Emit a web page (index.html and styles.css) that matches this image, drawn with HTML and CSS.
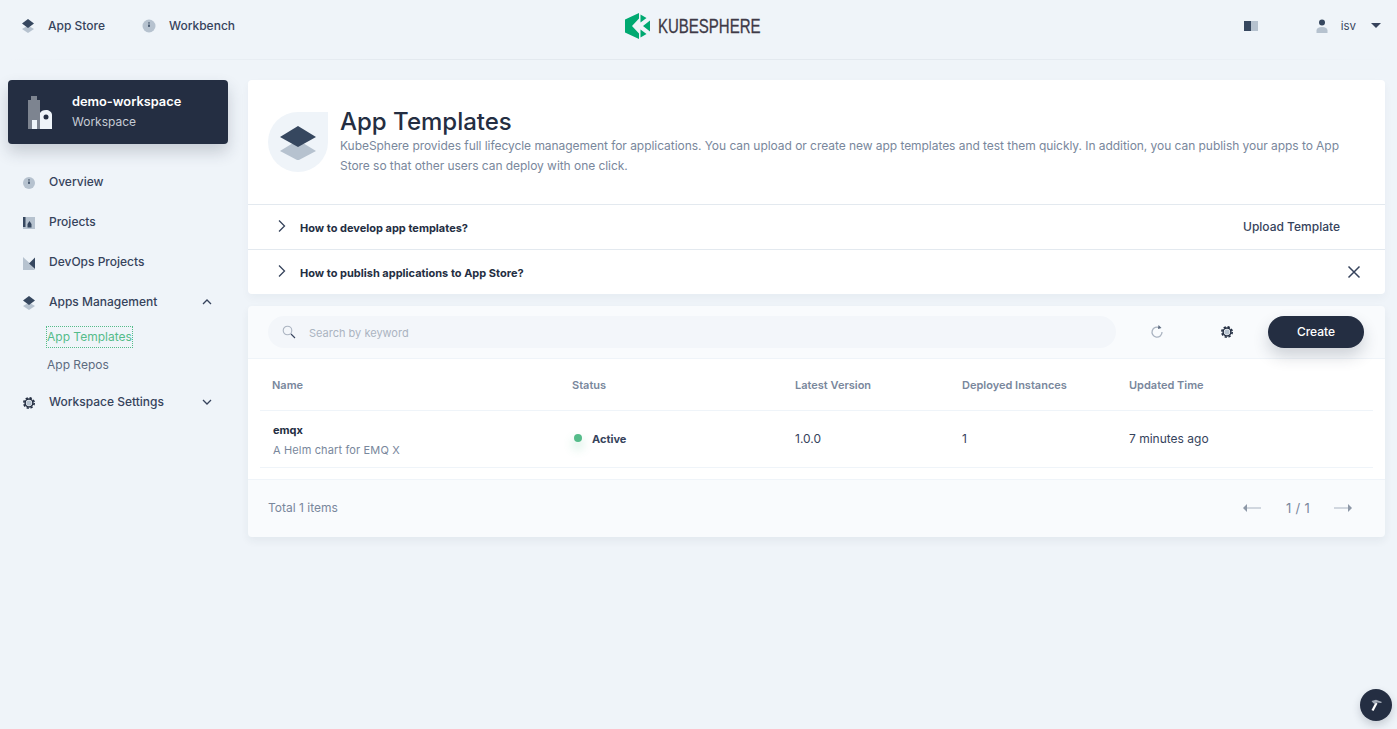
FILE: index.html
```html
<!DOCTYPE html>
<html lang="en">

<head>
    <meta charset="UTF-8">
    <title>App Templates - KubeSphere</title>
    <link rel="stylesheet" href="styles.css">
</head>

<body>
    <header class="topbar">
        <nav class="topnav">
            <a class="topnav-item">
                <svg class="icon" viewBox="0 0 16 16"><path class="light" d="M8 7.500l6 3.500-6 4-6-4z"/><path class="dark" d="M8 1l6 4.500L8 10 2 5.500z"/></svg>
                App Store
            </a>
            <a class="topnav-item">
                <svg class="icon" viewBox="0 0 16 16"><circle class="light" cx="8" cy="8" r="6.500"/><path class="dark" d="M7.500 4h1L8.300 8H7.700z"/><circle class="dark" cx="8" cy="8" r="1"/></svg>
                Workbench
            </a>
        </nav>
        <div class="logo">
            <svg class="logo-mark" viewBox="0 0 25 26">
                <path class="logo-green" d="M14 0L0 6.500v13L14 26v-5.500L7 13l7-7.500z"/>
                <path class="logo-green" d="M15.500 1.500l6 3.500-6 4.500zM25 7.500v11L18 13zM15.500 16.500l6 4.500-6 3.500z"/>
            </svg>
            <span class="logo-text">KUBESPHERE</span>
        </div>
        <div class="top-right">
            <svg class="icon" viewBox="0 0 16 16"><path class="dark" d="M1 3h7v10H1z"/><path class="light" d="M8 3h7v10H8z"/></svg>
            <div class="user">
                <svg class="icon" viewBox="0 0 16 16"><path class="light" d="M2.500 15v-2.500c0-2 2-3.500 5.500-3.500s5.500 1.500 5.500 3.500V15z"/><circle class="dark" cx="8" cy="4.500" r="3"/></svg>
                <span class="user-name">isv</span>
                <span class="caret"></span>
            </div>
        </div>
    </header>

    <div class="layout">
        <aside class="sidebar">
            <div class="ws-card">
                <svg class="ws-icon" viewBox="0 0 24 34">
                    <path fill="#7d8490" d="M0 5h3V1h6v4h3v29H0z"/>
                    <path fill="#eff4f9" d="M4 25h5v9H4z"/>
                    <path fill="#eff4f9" d="M12 18c1-2 3-3 6-3s6 2 6 5v14H12z"/>
                    <circle fill="#242e42" cx="18" cy="22" r="2.500"/>
                </svg>
                <div>
                    <div class="ws-name">demo-workspace</div>
                    <div class="ws-type">Workspace</div>
                </div>
            </div>
            <ul class="menu">
                <li class="menu-item">
                    <svg class="icon" viewBox="0 0 16 16"><circle class="light" cx="8" cy="8" r="6"/><path class="dark" d="M7.500 4h1L8.300 8H7.700z"/><circle class="dark" cx="8" cy="8" r="1"/></svg>
                    Overview
                </li>
                <li class="menu-item">
                    <svg class="icon" viewBox="0 0 16 16"><path class="light" d="M2 2h12v12H2z"/><path class="dark" d="M2 2h2.500v10H2zM6.500 9l2-3 2 3v3.500h-4z"/></svg>
                    Projects
                </li>
                <li class="menu-item">
                    <svg class="icon" viewBox="0 0 16 16"><path class="light" d="M2 2l7 6.500L14 15H2z"/><path class="dark" d="M14 2.500V14L8 8.500z"/></svg>
                    DevOps Projects
                </li>
                <li class="menu-item">
                    <svg class="icon" viewBox="0 0 16 16"><path class="light" d="M8 7.500l6 3.500-6 4-6-4z"/><path class="dark" d="M8 1l6 4.500L8 10 2 5.500z"/></svg>
                    Apps Management
                    <svg class="chev" viewBox="0 0 12 12"><path d="M2 8l4-4 4 4"/></svg>
                </li>
                <li class="sub-list">
                    <a class="sub-item active">App Templates</a>
                    <a class="sub-item">App Repos</a>
                </li>
                <li class="menu-item">
                    <svg class="icon" viewBox="0 0 16 16"><circle class="gear-teeth" cx="8" cy="8" r="5.200"/><circle class="gear-ring" cx="8" cy="8" r="3.900"/><circle class="light" cx="8" cy="8" r="2.600"/></svg>
                    Workspace Settings
                    <svg class="chev" viewBox="0 0 12 12"><path d="M2 4l4 4 4-4"/></svg>
                </li>
            </ul>
        </aside>

        <main class="content">
            <section class="banner">
                <div class="banner-head">
                    <div class="banner-icon">
                        <svg viewBox="0 0 36 36" width="36" height="36"><path fill="#b6c2cf" d="M18 16l18 11-18 9.500L0 27z"/><path fill="#36475f" d="M18 2l18 11-18 10L0 13z"/></svg>
                    </div>
                    <div>
                        <h1 class="banner-title">App Templates</h1>
                        <p class="banner-desc">KubeSphere provides full lifecycle management for applications. You can upload or create new app templates and test them quickly. In addition, you can publish your apps to App Store so that other users can deploy with one click.</p>
                    </div>
                </div>
                <div class="tip">
                    <svg class="tip-arrow" viewBox="0 0 12 12"><path d="M3 .5L8.500 6 3 11.500"/></svg>
                    <span class="tip-text">How to develop app templates?</span>
                    <a class="tip-link">Upload Template</a>
                </div>
                <div class="tip">
                    <svg class="tip-arrow" viewBox="0 0 12 12"><path d="M3 .5L8.500 6 3 11.500"/></svg>
                    <span class="tip-text">How to publish applications to App Store?</span>
                    <svg class="tip-close" viewBox="0 0 14 14"><path d="M1.500 1.500l11 11M12.500 1.500l-11 11"/></svg>
                </div>
            </section>

            <section class="panel">
                <div class="toolbar">
                    <div class="search">
                        <svg class="search-icon" viewBox="0 0 14 14"><circle cx="5.500" cy="5.500" r="4.300"/><path class="search-handle" d="M9 9l4 4"/></svg>
                        <span class="search-text">Search by keyword</span>
                    </div>
                    <svg class="tool-icon" viewBox="0 0 16 16"><path fill="none" stroke="#abb4c1" stroke-width="1.300" d="M10.500 3.800A5 5 0 1 0 13 8"/><path fill="#5d6b80" d="M9.500 1l3 3-3.500 1z"/></svg>
                    <svg class="tool-icon" viewBox="0 0 16 16"><circle class="gear-teeth" cx="8" cy="8" r="5.200"/><circle class="gear-ring" cx="8" cy="8" r="3.900"/><circle class="light" cx="8" cy="8" r="2.600"/></svg>
                    <button class="create-btn" type="button">Create</button>
                </div>
                <div class="table">
                    <div class="row head-row">
                        <div>Name</div>
                        <div>Status</div>
                        <div>Latest Version</div>
                        <div>Deployed Instances</div>
                        <div>Updated Time</div>
                    </div>
                    <div class="row body-row">
                        <div class="app-cell">
                            <div class="app-name">emqx</div>
                            <div class="app-desc">A Helm chart for EMQ X</div>
                        </div>
                        <div class="status"><span class="dot"></span>Active</div>
                        <div>1.0.0</div>
                        <div>1</div>
                        <div>7 minutes ago</div>
                    </div>
                </div>
                <div class="panel-foot">
                    <span>Total 1 items</span>
                    <div class="pager">
                        <svg class="pager-arrow" viewBox="0 0 18 8"><path fill="#d1d7df" d="M4 3h14v2H4z"/><path fill="#8d98a7" d="M4 0v8L0 4z"/></svg>
                        <span class="pager-num">1 / 1</span>
                        <svg class="pager-arrow" viewBox="0 0 18 8"><path fill="#d1d7df" d="M0 3h14v2H0z"/><path fill="#8d98a7" d="M14 0v8l4-4z"/></svg>
                    </div>
                </div>
            </section>
        </main>
    </div>

    <button class="tool-fab" type="button">
        <svg viewBox="0 0 16 16" width="16" height="16"><path fill="#fff" d="M3.500 13l2 1 4-7.500-2-1z"/><path fill="#a5adb9" d="M3.500 4l4.500-1.200L14 5l-1 1-4-.5L6.500 7l-1.300-1z"/></svg>
    </button>
</body>

</html>
```

FILE: styles.css
```css
* {
    box-sizing: border-box;
}

html,
body {
    margin: 0;
    height: 100%;
}

body {
    background: #eff4f9;
    color: #36435c;
    font-family: "Inter", "Roboto", sans-serif;
    font-size: 12px;
    line-height: 20px;
    overflow: hidden;
}

.icon {
    width: 16px;
    height: 16px;
    flex: none;
}

.dark {
    fill: #36475f;
}

.light {
    fill: #b6c2cf;
}

.gear-teeth {
    fill: none;
    stroke: #242e42;
    stroke-width: 1.600;
    stroke-dasharray: 2.300 1.780;
}

.gear-ring {
    fill: none;
    stroke: #242e42;
    stroke-width: 1.500;
}

/* top bar */
.topbar {
    display: flex;
    align-items: center;
    justify-content: space-between;
    height: 60px;
    padding: 0 16px 8px 20px;
    border-bottom: 1px solid transparent;
    border-image: linear-gradient(to right, #eff4f9, #e3e9ef 30%, #e3e9ef 70%, #eff4f9) 1;
    position: relative;
}

.topnav {
    display: flex;
    gap: 36px;
}

.topnav-item {
    display: flex;
    align-items: center;
    gap: 12px;
    font-weight: 500;
}

.logo {
    position: absolute;
    left: 625px;
    top: 13px;
    display: flex;
    align-items: center;
    gap: 8px;
}

.logo-mark {
    width: 25px;
    height: 26px;
}

.logo-green {
    fill: #00a971;
}

.logo-text {
    display: inline-block;
    width: 102px;
    color: #3e3a47;
    font-family: "Liberation Sans", sans-serif;
    font-size: 20px;
    line-height: 26px;
    white-space: nowrap;
    -webkit-text-stroke: .3px #3e3a47;
    transform-origin: left center;
    transform: scaleX(0.75);
}

.top-right {
    display: flex;
    align-items: center;
    gap: 55px;
}

.user {
    display: flex;
    align-items: center;
    gap: 10px;
}

.user .icon {
    margin-right: 1px;
}

.user-name {
    margin-right: 5px;
    font-size: 11.500px;
}

.caret {
    width: 0;
    height: 0;
    border-left: 5px solid transparent;
    border-right: 5px solid transparent;
    border-top: 5px solid #36435c;
}

/* page layout */
.layout {
    display: flex;
    align-items: flex-start;
    gap: 20px;
    padding: 20px 12px 0 8px;
}

.sidebar {
    width: 220px;
    flex: none;
}

.ws-card {
    display: flex;
    align-items: center;
    gap: 20px;
    height: 64px;
    padding: 0 20px;
    border-radius: 4px;
    background: #242e42;
    color: #fff;
    box-shadow: 0 8px 16px 0 rgba(36, 46, 66, .2);
}

.ws-icon {
    width: 24px;
    height: 34px;
    flex: none;
}

.ws-name {
    font-size: 12.800px;
    font-weight: 600;
}

.ws-type {
    color: #c6ccd5;
}

.menu {
    list-style: none;
    margin: 18px 0 0;
    padding: 0;
}

.menu-item {
    display: flex;
    align-items: center;
    gap: 12px;
    height: 40px;
    padding: 0 15px 0 13px;
    font-weight: 500;
}

.menu-item .icon {
    margin-top: 2px;
}

.chev {
    width: 12px;
    height: 12px;
    margin-left: auto;
    fill: none;
    stroke: #36435c;
    stroke-width: 1.300;
}

.sub-list {
    display: flex;
    flex-direction: column;
    align-items: flex-start;
    padding-left: 39px;
    margin-top: 5px;
    margin-bottom: -1px;
}

.sub-item {
    height: 20px;
    margin-bottom: 8px;
    color: #5d6b80;
}

.sub-item.active {
    color: #55bc8a;
    outline: 1px dotted #55bc8a;
}

/* banner */
.content {
    flex: 1;
    min-width: 0;
}

.banner {
    border-radius: 4px;
    background: #fff;
    box-shadow: 0 4px 8px 0 rgba(36, 46, 66, .04);
}

.banner-head {
    display: flex;
    gap: 12px;
    height: 124px;
    padding: 27px 40px 0 20px;
}

.banner-icon {
    display: flex;
    align-items: center;
    justify-content: center;
    width: 60px;
    height: 60px;
    margin-top: 5px;
    border-radius: 50% 0 50% 50%;
    background: #eff4f9;
    flex: none;
}

.banner-title {
    margin: 0;
    color: #242e42;
    font-size: 24px;
    font-weight: 500;
    line-height: 29px;
}

.banner-desc {
    margin: 0;
    color: #79879c;
    letter-spacing: -.05px;
}

.tip {
    display: flex;
    align-items: center;
    height: 45px;
    padding: 0 24px 0 28px;
    border-top: 1px solid #e3e9ef;
}

.tip-arrow {
    width: 12px;
    height: 12px;
    margin-right: 12px;
    margin-top: -2px;
    fill: none;
    stroke: #36435c;
    stroke-width: 1.300;
}

.tip-text {
    margin-top: 2px;
    color: #242e42;
    font-size: 11px;
    font-weight: 700;
}

.tip-link {
    margin-left: auto;
    margin-right: 21px;
    font-weight: 500;
}

.tip-close {
    width: 14px;
    height: 14px;
    margin-left: auto;
    fill: none;
    stroke: #36435c;
    stroke-width: 1.500;
}

/* table panel */
.panel {
    margin-top: 12px;
    border-radius: 4px;
    background: #f9fbfd;
    box-shadow: 0 4px 8px 0 rgba(36, 46, 66, .06);
}

.toolbar {
    display: flex;
    align-items: center;
    height: 53px;
    padding: 0 21px 0 20px;
    border-bottom: 1px solid #eff4f9;
}

.search {
    display: flex;
    align-items: center;
    gap: 13px;
    flex: 1;
    height: 32px;
    padding: 0 14px;
    border-radius: 16px;
    background: #f3f6fa;
}

.search-icon {
    width: 14px;
    height: 14px;
    fill: none;
    stroke: #abb4c1;
    stroke-width: 1.100;
}

.search-handle {
    stroke: #36435c;
}

.search-text {
    margin-top: 2px;
    color: #abb4c1;
    font-size: 11px;
}

.tool-icon {
    width: 16px;
    height: 16px;
    margin-left: 33px;
    flex: none;
}

.tool-icon + .tool-icon {
    margin-left: 54px;
}

.create-btn {
    width: 96px;
    height: 32px;
    margin-left: 33px;
    border: 0;
    border-radius: 16px;
    background: #242e42;
    color: #fff;
    font: 500 12px/20px "Inter", sans-serif;
    box-shadow: 0 8px 16px 0 rgba(36, 46, 66, .2);
}

.table {
    padding: 0 12px 11px;
    background: #fff;
}

.row {
    display: grid;
    grid-template-columns: 300px 223px 167px 167px 1fr;
    align-items: center;
    padding: 0 12px;
    border-bottom: 1px solid #eff4f9;
}

.head-row {
    height: 52px;
    padding-top: 1px;
    color: #79879c;
    font-size: 11px;
    font-weight: 600;
}

.body-row {
    height: 57px;
}

.app-cell {
    padding: 1px 0 0 1px;
}

.app-name {
    color: #242e42;
    font-size: 11px;
    font-weight: 700;
}

.app-desc {
    color: #79879c;
    font-size: 11px;
    letter-spacing: .14px;
}

.status {
    display: flex;
    align-items: center;
    gap: 10px;
    font-size: 11px;
    font-weight: 700;
}

.dot {
    width: 8px;
    height: 8px;
    margin-left: 2px;
    margin-top: -2px;
    border-radius: 50%;
    background: #55bc8a;
    box-shadow: 0 6px 10px 2px rgba(85, 188, 138, .2);
}

.panel-foot {
    display: flex;
    align-items: center;
    justify-content: space-between;
    height: 58px;
    padding: 0 33px 2px 20px;
    border-top: 1px solid #eff4f9;
    color: #79879c;
}

.pager {
    display: flex;
    align-items: center;
    gap: 24px;
}

.pager-num {
    margin-left: 1px;
    font-size: 13px;
    letter-spacing: .3px;
}

.pager-arrow {
    width: 18px;
    height: 8px;
}

.tool-fab {
    position: fixed;
    right: 5px;
    bottom: 8px;
    display: flex;
    align-items: center;
    justify-content: center;
    width: 32px;
    height: 32px;
    padding: 0;
    border: 0;
    border-radius: 50%;
    background: #242e42;
    box-shadow: 0 4px 8px 0 rgba(36, 46, 66, .2);
}
```
